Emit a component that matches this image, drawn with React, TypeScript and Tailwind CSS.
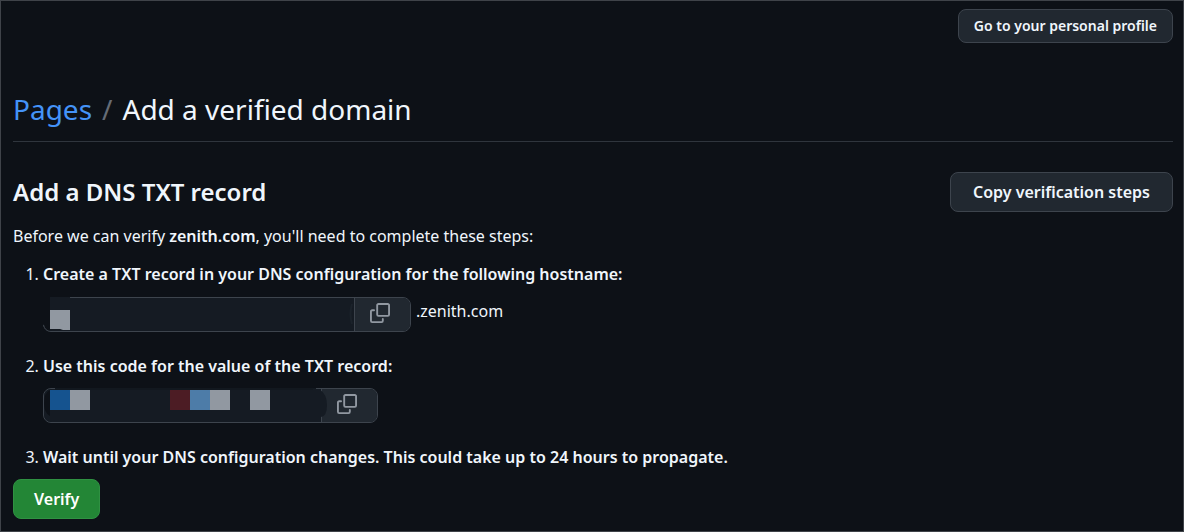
import type { ReactNode } from "react";

function CopyIcon() {
  return (
    <svg viewBox="0 0 16 16" className="size-5 fill-[#9198a1]" aria-hidden="true">
      <path d="M0 6.75C0 5.784.784 5 1.75 5h1.5a.75.75 0 0 1 0 1.5h-1.5a.25.25 0 0 0-.25.25v7.5c0 .138.112.25.25.25h7.5a.25.25 0 0 0 .25-.25v-1.5a.75.75 0 0 1 1.5 0v1.5A1.75 1.75 0 0 1 9.25 16h-7.5A1.75 1.75 0 0 1 0 14.25Z" />
      <path d="M5 1.75C5 .784 5.784 0 6.75 0h7.5C15.216 0 16 .784 16 1.75v7.5A1.75 1.75 0 0 1 14.25 11h-7.5A1.75 1.75 0 0 1 5 9.25Zm1.75-.25a.25.25 0 0 0-.25.25v7.5c0 .138.112.25.25.25h7.5a.25.25 0 0 0 .25-.25v-7.5a.25.25 0 0 0-.25-.25Z" />
    </svg>
  );
}

/* Pixelated masks that hide the secret values. */
function HostnameMask() {
  return (
    <svg viewBox="0 0 312 36" className="pointer-events-none absolute -top-px -left-px h-9 w-[312px]" aria-hidden="true">
      <path d="M0 0H7V35.500Q2 34 0 27Z" fill="#0d1117" />
      <path d="M0.500 28Q2 34 7.500 34.500" fill="none" stroke="#3d444d" />
      <path d="M7 0H27V2H7Z" fill="#151b23" />
      <path d="M7 13H27V33H20L17 32H7Z" fill="#9198a1" />
      <path d="M309 7Q306 17 309 27" fill="none" stroke="#1b222a" strokeWidth="2" />
    </svg>
  );
}

function CodeMask() {
  return (
    <svg viewBox="0 0 290 36" className="pointer-events-none absolute -top-px -left-px h-9 w-[290px]" aria-hidden="true">
      <path d="M12 0H273V2H12Z" fill="#12181f" />
      <path d="M7 2Q1 5 1 15T7 28Z" fill="#0d1117" />
      <path d="M270 1H276Q284 6 284 17T278 29H270Z" fill="#151b23" />
      <path d="M7 2H27V22H7Z" fill="#15538f" />
      <path d="M27 2H47V22H27Z" fill="#9198a1" />
      <path d="M127 2H147V22H127Z" fill="#4c1c24" />
      <path d="M147 2H167V22H147Z" fill="#4d7ca8" />
      <path d="M167 2H187V22H167Z" fill="#9198a1" />
      <path d="M207 2H227V22H207Z" fill="#9198a1" />
    </svg>
  );
}

type FieldProps = { label: string; inputClass: string; children: ReactNode };

function CopyField({ label, inputClass, children }: FieldProps) {
  return (
    <div className="relative flex h-[35px] rounded-lg border border-[#3d444d] bg-[#151b23]">
      <input readOnly aria-label={label} className={`${inputClass} min-w-0 rounded-l-lg bg-[#151b23] px-3 outline-none`} />
      <button
        type="button"
        aria-label={`Copy ${label}`}
        className="flex w-14 items-start rounded-r-[7px] border-l border-[#3d444d] bg-[#212830] pt-[5px] pl-[15px]"
      >
        <CopyIcon />
      </button>
      {children}
    </div>
  );
}

export default function App() {
  return (
    <main className="min-h-screen border border-[#3f4349] bg-[#0d1117] pt-2 pr-[10px] pb-3 pl-3 font-['Noto_Sans','Open_Sans',sans-serif] text-base leading-7 text-[#f0f6fc]">
      <div className="flex justify-end">
        <button type="button" className="h-[34px] rounded-lg border border-[#3d444d] bg-[#212830] px-[15px] text-sm font-semibold">
          Go to your personal profile
        </button>
      </div>

      <h1 className="mt-[42px] flex gap-[10px] border-b border-[#2f353d] pb-2 text-[28px] leading-[48px]">
        <a href="#pages" className="text-[#4493f8]">Pages</a>
        <span className="text-[#656c76]">/</span>
        <span>Add a verified domain</span>
      </h1>

      <div className="mt-[30px] flex items-center justify-between">
        <h2 className="text-2xl font-semibold">Add a DNS TXT record</h2>
        <button type="button" className="h-10 rounded-lg border border-[#3d444d] bg-[#212830] px-[22px] font-semibold">
          Copy verification steps
        </button>
      </div>

      <p className="mt-[10px]">
        Before we can verify <strong className="font-semibold">zenith.com</strong>, you'll need to complete these steps:
      </p>

      <ol className="mt-[10px] list-decimal space-y-5 pl-[30px]">
        <li>
          <strong className="font-semibold">Create a TXT record in your DNS configuration for the following hostname:</strong>
          <div className="mt-[9px] flex gap-[5px]">
            <CopyField label="TXT record hostname" inputClass="w-[310px]">
              <HostnameMask />
            </CopyField>
            <span>.zenith.com</span>
          </div>
        </li>
        <li>
          <strong className="font-semibold">Use this code for the value of the TXT record:</strong>
          <div className="mt-2 flex">
            <CopyField label="TXT record value" inputClass="w-[277px]">
              <CodeMask />
            </CopyField>
          </div>
        </li>
        <li>
          <strong className="font-semibold">Wait until your DNS configuration changes. This could take up to 24 hours to propagate.</strong>
        </li>
      </ol>

      <button type="button" className="mt-2 block h-10 rounded-lg border border-[#2f9142] bg-[#238636] px-5 font-semibold text-white">
        Verify
      </button>
    </main>
  );
}
